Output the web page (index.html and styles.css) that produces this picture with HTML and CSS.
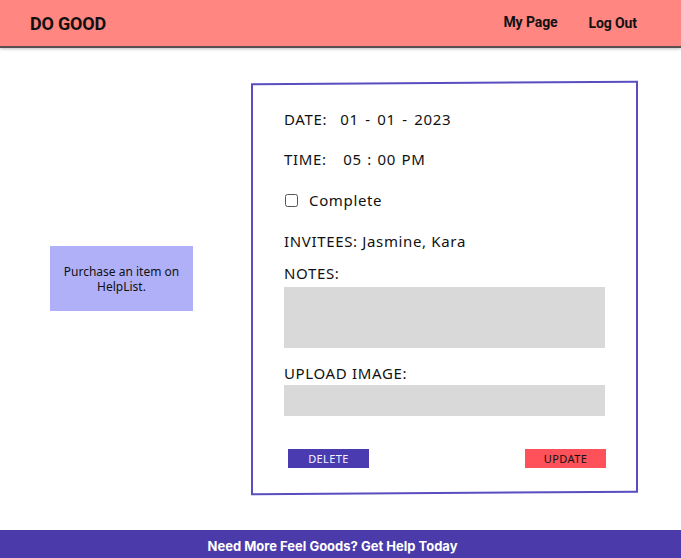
FILE: index.html
```html
<!DOCTYPE html>
<html>
<head>
<meta charset="utf-8">
<link rel="stylesheet" href="styles.css">
</head>
<body>
<header class="topbar">
  <div class="brand">DO GOOD</div>
  <nav class="nav">
    <a class="nav-link">My Page</a>
    <a class="nav-link">Log Out</a>
  </nav>
</header>
<main class="main">
  <div class="promo">Purchase an item on HelpList.</div>
  <section class="card">
    <div class="row row-date">DATE:&nbsp; 01 - 01 - 2023</div>
    <div class="row row-time">TIME: &nbsp; 05 : 00 PM</div>
    <label class="row row-check"><span class="box"></span>Complete</label>
    <div class="row row-invitees">INVITEES: Jasmine, Kara</div>
    <div class="row row-notes">NOTES:</div>
    <div class="field field-notes"></div>
    <div class="row row-upload">UPLOAD IMAGE:</div>
    <div class="field field-upload"></div>
    <div class="actions">
      <button class="btn btn-delete">DELETE</button>
      <button class="btn btn-update">UPDATE</button>
    </div>
  </section>
</main>
<footer class="footer">Need More Feel Goods? Get Help Today</footer>
</body>
</html>
```
FILE: styles.css
```css
html, body {
  margin: 0;
  padding: 0;
  background: #ffffff;
}
body {
  width: 681px;
  height: 558px;
  display: flex;
  flex-direction: column;
  overflow: hidden;
}
.topbar {
  height: 46px;
  flex: none;
  background: #ff8681;
  display: flex;
  align-items: center;
  justify-content: space-between;
  padding: 0 44px 0 30px;
  box-shadow: 0 2px 0 #5a5050, 0 3px 3px rgba(0,0,0,0.25);
  position: relative;
  z-index: 1;
}
.brand {
  font-family: Roboto, "Liberation Sans", sans-serif;
  font-weight: 700;
  font-size: 18px;
  color: #111;
  letter-spacing: -0.2px;
}
.nav {
  display: flex;
  gap: 31px;
}
.nav-link {
  font-family: Roboto, "Liberation Sans", sans-serif;
  font-weight: 700;
  font-size: 14px;
  color: #111;
  letter-spacing: -0.1px;
}
.nav-link:first-child {
  position: relative;
  top: -1px;
}
.main {
  flex: 1;
  display: flex;
  align-items: flex-start;
  padding: 36px 0 0 50px;
}
.promo {
  width: 143px;
  height: 65px;
  margin-top: 164px;
  background: #b0b0f8;
  display: flex;
  align-items: center;
  justify-content: center;
  text-align: center;
  font-family: "Noto Sans", sans-serif;
  font-size: 12px;
  line-height: 15px;
  color: #111;
  padding: 0 8px;
  box-sizing: border-box;
}
.card {
  position: relative;
  margin-left: 58px;
  width: 387px;
  height: 412px;
  box-sizing: border-box;
  padding: 27px 33px 0 33px;
  font-family: "Noto Sans", sans-serif;
  font-size: 15px;
  color: #111;
  display: flex;
  flex-direction: column;
}
.card::before {
  content: "";
  position: absolute;
  inset: 0;
  border: 2px solid #5a4dbf;
  transform: skewY(-0.38deg);
  pointer-events: none;
}
.row {
  height: 20px;
  line-height: 20px;
  letter-spacing: 0.65px;
}
.row-date { word-spacing: 2px; }
.row-time { margin-top: 20px; word-spacing: 1px; }
.row-check {
  margin-top: 21px;
  display: flex;
  align-items: center;
  gap: 11px;
}
.box {
  width: 11px;
  height: 11px;
  border: 1.3px solid #555;
  border-radius: 2.5px;
  margin-left: 1px;
}
.row-invitees { margin-top: 21px; }
.row-notes { margin-top: 12px; }
.field {
  background: #d9d9d9;
  width: 321px;
}
.field-notes {
  margin-top: 4px;
  height: 61px;
}
.row-upload { margin-top: 15px; }
.field-upload {
  margin-top: 2px;
  height: 31px;
}
.actions {
  margin-top: 33px;
  display: flex;
  justify-content: space-between;
  padding: 0 0 0 4px;
  width: 322px;
  box-sizing: border-box;
}
.btn {
  width: 81px;
  height: 19px;
  border: none;
  padding: 0;
  font-family: "Noto Sans", sans-serif;
  font-size: 11px;
  letter-spacing: 0.4px;
}
.btn-delete {
  background: #4b3bb0;
  color: #f4f4ff;
}
.btn-update {
  background: #ff5159;
  color: #111;
}
.footer {
  height: 28px;
  flex: none;
  background: #4a3aaa;
  color: #fff;
  font-family: Inter, "Liberation Sans", sans-serif;
  font-weight: 700;
  font-size: 13px;
  display: flex;
  align-items: center;
  justify-content: center;
  padding-right: 16px;
  padding-top: 4px;
  box-sizing: border-box;
}
```
